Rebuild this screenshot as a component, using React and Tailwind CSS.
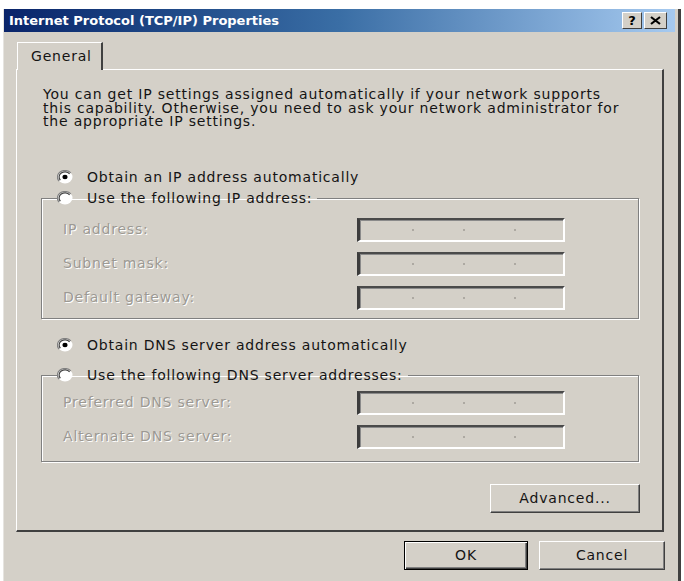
import React from 'react';

const Radio = ({ checked }) => (
  <svg width="16" height="14" viewBox="0 0 16 14" className="shrink-0">
    <ellipse cx="8" cy="7" rx="7.5" ry="6.5" fill="#ffffff" />
    <path d="M2.2 11.2 A7 6 0 0 1 13.8 2.8" stroke="#808080" strokeWidth="1.2" fill="none" />
    <path d="M3.4 10.2 A5.8 5 0 0 1 12.6 3.8" stroke="#404040" strokeWidth="1.2" fill="none" />
    {checked && <ellipse cx="8" cy="7" rx="2.6" ry="2.2" fill="#000000" />}
  </svg>
);

// sunken IP field, disabled
const IpBox = () => (
  <div className="w-[208px] h-[24px] border-2 border-l-[3px] border-t-[#4a4a4a] border-l-[#3c3c3c] border-r-white border-b-white shadow-[inset_1px_1px_0_#8a8a8a] bg-[#d4d0c8] flex items-center pl-[52px] gap-[49px]">
    <span className="w-[2px] h-[2px] rounded-full bg-[#a09c96]" />
    <span className="w-[2px] h-[2px] rounded-full bg-[#a09c96]" />
    <span className="w-[2px] h-[2px] rounded-full bg-[#a09c96]" />
  </div>
);

const FieldRow = ({ label }) => (
  <div className="flex items-center">
    <span className="w-[294px] text-[#9c9993] [text-shadow:1px_1px_0_#ffffff]">{label}</span>
    <IpBox />
  </div>
);

const RadioRow = ({ checked, children }) => (
  <div className="flex items-center gap-[14px] leading-[17px] whitespace-nowrap">
    <Radio checked={checked} />
    <span>{children}</span>
  </div>
);

const btn =
  'flex items-center justify-center h-[29px] bg-[#d4d0c8] border border-t-white border-l-white border-r-[#404040] border-b-[#404040] shadow-[inset_-1px_-1px_0_#808080]';

const groupBox =
  'ml-[24px] w-[598px] border border-[#808080] shadow-[inset_1px_1px_0_#ffffff,1px_1px_0_#ffffff]';

export default function App() {
  return (
    <div className="w-[684px] h-[581px] bg-white overflow-hidden pt-[9px] pl-[3px] font-['DejaVu_Sans',sans-serif] text-[14px] tracking-[0.8px] text-[#141414]">
      <div className="w-[678px] h-[572px] bg-[#d4d0c8] border-l border-l-[#e6e4e0] border-r-[3px] border-r-[#404040] flex flex-col">
        {/* title bar */}
        <div className="h-[23px] mr-[3px] flex items-center justify-between pl-[5px] pr-[8px] bg-linear-to-r from-[#0a246a] via-[#3a6ea5] to-[#a6caf0]">
          <span className="text-white font-bold text-[13px] tracking-normal">Internet Protocol (TCP/IP) Properties</span>
          <div className="flex gap-[2px]">
            <div className="w-[20px] h-[17px] bg-[#d4d0c8] border border-t-white border-l-white border-r-[#404040] border-b-[#404040] flex items-center justify-center font-bold text-[13px] tracking-normal leading-none text-black">
              ?
            </div>
            <div className="w-[23px] h-[17px] bg-[#d4d0c8] border border-t-white border-l-white border-r-[#404040] border-b-[#404040] flex items-center justify-center">
              <svg width="11" height="9" viewBox="0 0 11 9">
                <path d="M1 1 L10 8 M10 1 L1 8" stroke="#000" strokeWidth="2.2" />
              </svg>
            </div>
          </div>
        </div>

        <div className="flex flex-col pt-[10px] pl-[12px] pr-[14px]">
          {/* tab */}
          <div className="relative z-10 -mb-px ml-px w-[86px] h-[28px] bg-[#d4d0c8] border-t border-l border-t-white border-l-white border-r-2 border-r-[#404040] flex items-center pl-[13px]">
            General
          </div>

          {/* tab panel */}
          <div className="h-[463px] border-t border-l border-t-white border-l-white border-r-2 border-b-2 border-r-[#404040] border-b-[#404040] flex flex-col pt-[18px]">
            <p className="pl-[26px] leading-[13.5px] whitespace-nowrap">
              You can get IP settings assigned automatically if your network supports
              <br />
              this capability. Otherwise, you need to ask your network administrator for
              <br />
              the appropriate IP settings.
            </p>

            <div className="mt-[40px] pl-[40px]">
              <RadioRow checked>Obtain an IP address automatically</RadioRow>
            </div>

            <fieldset className={groupBox + ' mt-[4px] pb-[8px]'}>
              <legend className="ml-[15px] pr-[5px]">
                <RadioRow>Use the following IP address:</RadioRow>
              </legend>
              <div className="flex flex-col gap-[10px] mt-[11px] pl-[21px]">
                <FieldRow label="IP address:" />
                <FieldRow label="Subnet mask:" />
                <FieldRow label="Default gateway:" />
              </div>
            </fieldset>

            <div className="mt-[18px] pl-[40px]">
              <RadioRow checked>Obtain DNS server address automatically</RadioRow>
            </div>

            <fieldset className={groupBox + ' mt-[13px] pb-[12px]'}>
              <legend className="ml-[15px] pr-[5px]">
                <RadioRow>Use the following DNS server addresses:</RadioRow>
              </legend>
              <div className="flex flex-col gap-[10px] mt-[7px] pl-[21px]">
                <FieldRow label="Preferred DNS server:" />
                <FieldRow label="Alternate DNS server:" />
              </div>
            </fieldset>

            <div className="flex justify-end pr-[22px] mt-[22px]">
              <button className={btn + ' w-[150px] h-[28px]'}>Advanced...</button>
            </div>
          </div>

          {/* dialog buttons */}
          <div className="flex justify-end gap-[11px] mt-[9px] -mr-px">
            <button className="w-[124px] h-[29px] flex items-center justify-center bg-[#d4d0c8] border border-black shadow-[inset_1px_1px_0_#ffffff,inset_-1px_-1px_0_#404040,inset_-2px_-2px_0_#808080]">
              OK
            </button>
            <button className={btn + ' w-[126px]'}>Cancel</button>
          </div>
        </div>
      </div>
    </div>
  );
}
